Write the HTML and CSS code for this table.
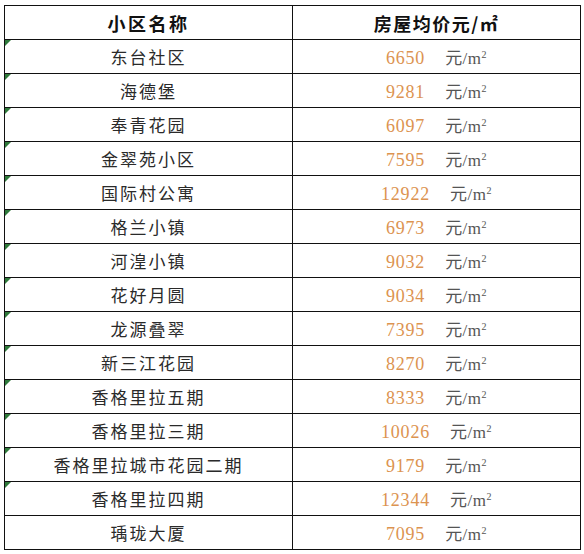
FILE: index.html
```html
<!DOCTYPE html>
<html lang="zh">
<head>
<meta charset="utf-8">
<link rel="stylesheet" href="styles.css">
</head>
<body>
<div class="sheet">
<table class="price-table">
  <thead>
    <tr><th class="col-name">小区名称</th><th class="col-price head-price">房屋均价元/㎡</th></tr>
  </thead>
  <tbody>
    <tr class="flag"><td class="name">东台社区</td><td class="price"><span class="num">6650</span><span class="unit">元/m<sup>2</sup></span></td></tr>
    <tr class="flag"><td class="name">海德堡</td><td class="price"><span class="num">9281</span><span class="unit">元/m<sup>2</sup></span></td></tr>
    <tr class="flag"><td class="name">奉青花园</td><td class="price"><span class="num">6097</span><span class="unit">元/m<sup>2</sup></span></td></tr>
    <tr class="flag"><td class="name">金翠苑小区</td><td class="price"><span class="num">7595</span><span class="unit">元/m<sup>2</sup></span></td></tr>
    <tr class="flag"><td class="name">国际村公寓</td><td class="price"><span class="num">12922</span><span class="unit">元/m<sup>2</sup></span></td></tr>
    <tr class="flag"><td class="name">格兰小镇</td><td class="price"><span class="num">6973</span><span class="unit">元/m<sup>2</sup></span></td></tr>
    <tr class="flag"><td class="name">河湟小镇</td><td class="price"><span class="num">9032</span><span class="unit">元/m<sup>2</sup></span></td></tr>
    <tr class="flag"><td class="name">花好月圆</td><td class="price"><span class="num">9034</span><span class="unit">元/m<sup>2</sup></span></td></tr>
    <tr class="flag"><td class="name">龙源叠翠</td><td class="price"><span class="num">7395</span><span class="unit">元/m<sup>2</sup></span></td></tr>
    <tr class="flag"><td class="name">新三江花园</td><td class="price"><span class="num">8270</span><span class="unit">元/m<sup>2</sup></span></td></tr>
    <tr class="flag"><td class="name">香格里拉五期</td><td class="price"><span class="num">8333</span><span class="unit">元/m<sup>2</sup></span></td></tr>
    <tr class="flag"><td class="name">香格里拉三期</td><td class="price"><span class="num">10026</span><span class="unit">元/m<sup>2</sup></span></td></tr>
    <tr class="flag"><td class="name">香格里拉城市花园二期</td><td class="price"><span class="num">9179</span><span class="unit">元/m<sup>2</sup></span></td></tr>
    <tr class="flag"><td class="name">香格里拉四期</td><td class="price"><span class="num">12344</span><span class="unit">元/m<sup>2</sup></span></td></tr>
    <tr><td class="name">瑀珑大厦</td><td class="price"><span class="num">7095</span><span class="unit">元/m<sup>2</sup></span></td></tr>
  </tbody>
</table>
</div>
</body>
</html>
```

FILE: styles.css
```css
html, body {
  margin: 0;
  padding: 0;
  background: #ffffff;
}

.sheet {
  padding: 5px 0 0 4px;
}

.price-table {
  border-collapse: collapse;
  table-layout: fixed;
  width: 577px;
  font-family: "Noto Sans CJK SC", "Noto Sans", sans-serif;
  color: #1a1a1a;
}

.price-table th,
.price-table td {
  border: 1px solid #111111;
  height: 33px;
  padding: 0;
  text-align: center;
  vertical-align: middle;
  position: relative;
}

.col-name {
  width: 287px;
}

.price-table th {
  font-size: 18px;
  font-weight: 700;
  letter-spacing: 2.5px;
  color: #111111;
}

.price-table th.head-price {
  letter-spacing: 1.5px;
}

.name {
  font-size: 17px;
  letter-spacing: 2px;
  color: #2a2a2a;
}

.price {
  white-space: nowrap;
}

.num {
  font-family: "Liberation Serif", serif;
  font-size: 18px;
  letter-spacing: 0.8px;
  color: #dc9350;
}

.unit {
  margin-left: 20px;
  font-family: "Liberation Serif", "Noto Sans CJK SC", serif;
  font-size: 17px;
  letter-spacing: 0.5px;
  color: #555555;
}

.unit sup {
  font-size: 10px;
  vertical-align: 6px;
  line-height: 0;
}

.flag .name::before {
  content: "";
  position: absolute;
  left: 0;
  top: 0;
  width: 0;
  height: 0;
  border-top: 6px solid #2f7a3b;
  border-right: 6px solid transparent;
}
```
